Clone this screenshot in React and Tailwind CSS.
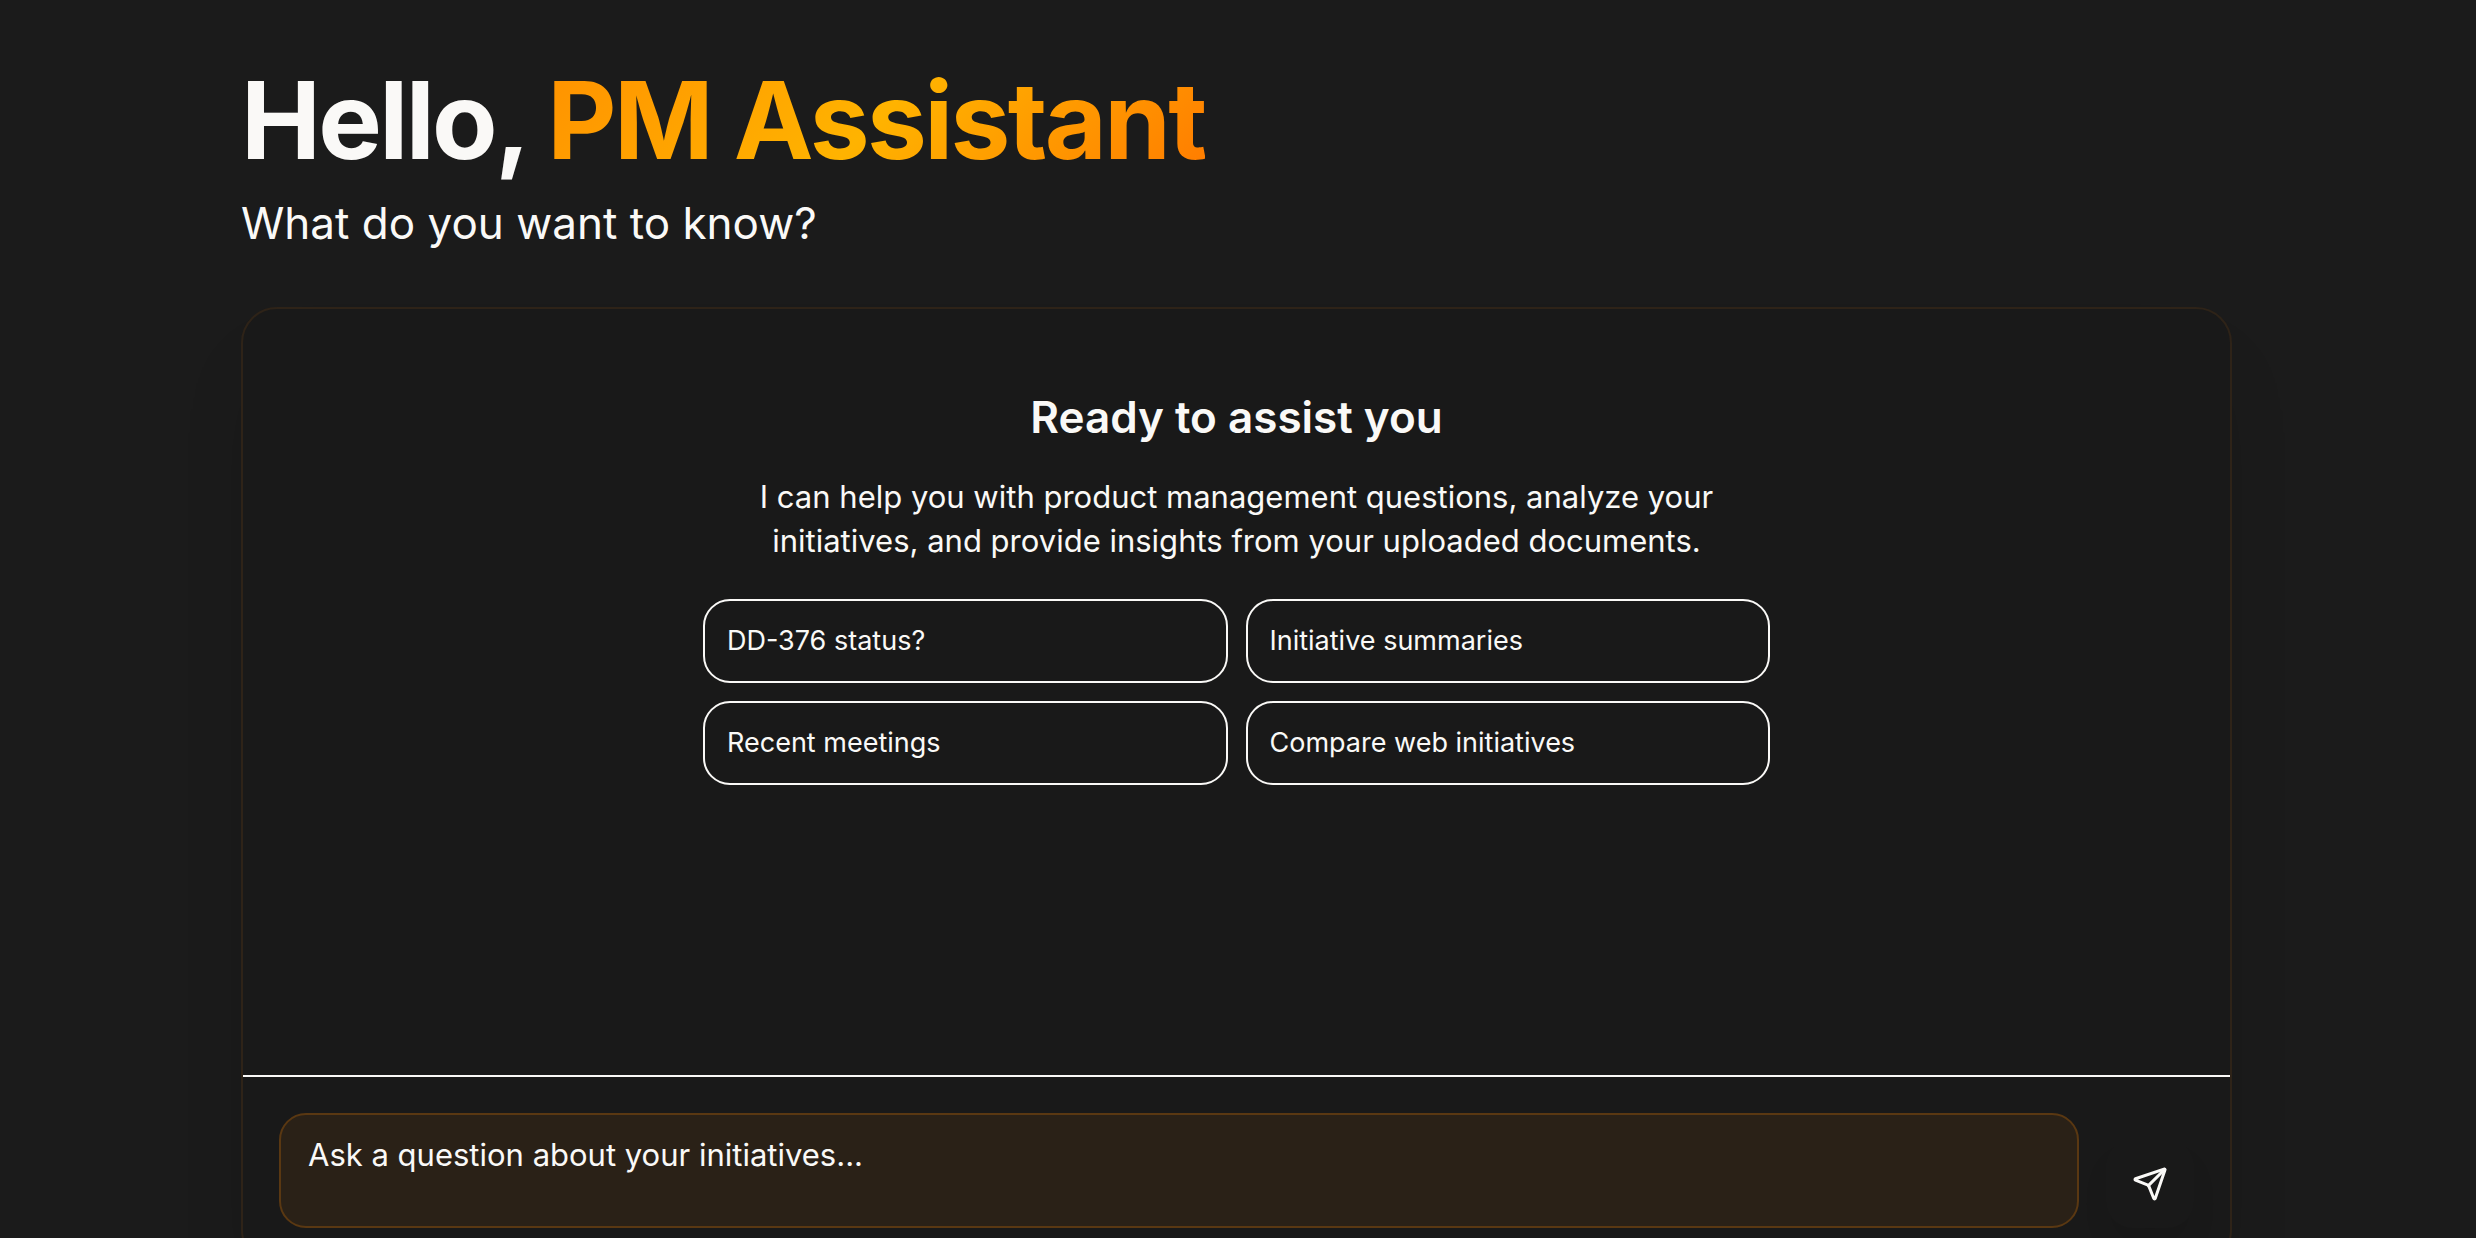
import React, { useState } from 'react';
import { Send } from 'lucide-react';

const suggestions = [
  'DD-376 status?',
  'Initiative summaries',
  'Recent meetings',
  'Compare web initiatives',
];

const App = () => {
  const [question, setQuestion] = useState('');

  const handleSubmit = (e) => {
    e.preventDefault();
    if (!question.trim()) return;
    setQuestion('');
  };

  return (
    <div className="h-screen overflow-hidden bg-[#1b1b1b] pt-[62px] pl-[241px] pr-[244px] font-['Inter',sans-serif] text-[#faf9f7]">

      {/* Greeting */}
      <header className="mb-14">
        <h1 className="text-[107px] leading-[117px] font-bold tracking-tight">
          Hello,{' '}
          <span className="bg-linear-135 from-[#ff9100] via-[#ffb300] to-[#ff7a00] bg-clip-text text-transparent">PM Assistant</span>
        </h1>
        <p className="mt-4 text-[44px] leading-[56px]">What do you want to know?</p>
      </header>

      {/* Chat card */}
      <main className="rounded-[36px] border-2 border-[#2e2318] bg-[#191919] shadow-[0_50px_80px_-24px_rgba(0,0,0,0.2)]">
        <section className="flex min-h-[766px] flex-col items-center pt-20 text-center">
          <h2 className="text-[44px] leading-[56px] font-semibold">Ready to assist you</h2>
          <p className="mt-[30px] max-w-[1008px] text-[31px] leading-[44px]">
            I can help you with product management questions, analyze your initiatives, and provide insights from your uploaded documents.
          </p>
          <div className="mt-9 grid w-full max-w-[1067px] grid-cols-2 gap-[18px]">
            {suggestions.map(text => (
              <button
                key={text}
                type="button"
                onClick={() => setQuestion(text)}
                className="h-[84px] cursor-pointer rounded-[27px] border-2 border-[#faf9f7] px-[22px] text-left text-[27px] leading-[36px]"
              >
                {text}
              </button>
            ))}
          </div>
        </section>

        <form onSubmit={handleSubmit} className="flex items-end gap-[27px] border-t-2 border-[#faf9f7] p-9">
          <textarea
            aria-label="Question"
            value={question}
            onChange={e => setQuestion(e.target.value)}
            placeholder="Ask a question about your initiatives..."
            className="h-[115px] flex-1 resize-none rounded-[27px] border-2 border-[#5a3812] bg-[#2a2117] px-[27px] py-[18px] text-[31px] leading-[44px] outline-none placeholder:text-[#faf9f7]"
          />
          <button
            type="submit"
            aria-label="Send"
            className="flex size-[88px] cursor-pointer items-center justify-center rounded-[27px] shadow-[0_20px_30px_-6px_rgba(0,0,0,0.1)]"
          >
            <Send className="size-9" />
          </button>
        </form>
      </main>

    </div>
  );
};

export default App;
